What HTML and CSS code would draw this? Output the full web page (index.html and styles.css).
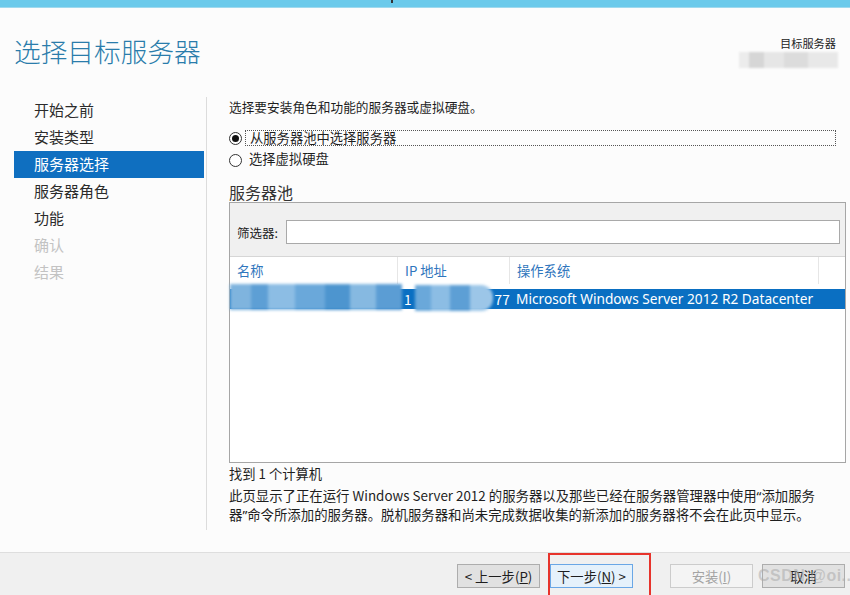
FILE: index.html
```html
<!DOCTYPE html>
<html lang="zh-CN">
  <head>
    <meta charset="UTF-8" />
    <meta name="viewport" content="width=device-width, initial-scale=1.0" />
    <title>添加角色和功能向导</title>
    <link rel="stylesheet" href="styles.css">
  </head>
  <body>
    <div class="topbar"><span class="tick"></span></div>

    <header class="header">
      <h1 class="title">选择目标服务器</h1>
      <div class="target">
        <div class="target-label">目标服务器</div>
        <div class="target-blur"></div>
      </div>
    </header>

    <div class="main">
      <nav class="steps">
        <div class="step">开始之前</div>
        <div class="step">安装类型</div>
        <div class="step active">服务器选择</div>
        <div class="step">服务器角色</div>
        <div class="step">功能</div>
        <div class="step disabled">确认</div>
        <div class="step disabled">结果</div>
      </nav>

      <section class="content">
        <p class="intro">选择要安装角色和功能的服务器或虚拟硬盘。</p>

        <div class="radio-row first">
          <span class="radio checked"></span>
          <span class="radio-label focus">从服务器池中选择服务器</span>
        </div>
        <div class="radio-row">
          <span class="radio"></span>
          <span class="radio-label">选择虚拟硬盘</span>
        </div>

        <h2 class="pool-title">服务器池</h2>

        <div class="pool">
          <div class="filter">
            <span class="filter-label">筛选器:</span>
            <div class="filter-input"></div>
          </div>
          <div class="grid">
            <div class="grid-head">
              <div class="col col-name">名称</div>
              <div class="col col-ip">IP 地址</div>
              <div class="col col-os">操作系统</div>
              <div class="col col-end"></div>
            </div>
            <div class="grid-row selected">
              <div class="col col-name"><span class="blur name-blur"></span></div>
              <div class="col col-ip">1<span class="blur ip-blur"></span>77</div>
              <div class="col col-os">Microsoft Windows Server 2012 R2 Datacenter</div>
            </div>
          </div>
        </div>

        <p class="found">找到 1 个计算机</p>
        <p class="note">此页显示了正在运行 Windows Server 2012 的服务器以及那些已经在服务器管理器中使用<span class="q">“</span>添加服务<br>器<span class="q">”</span>命令所添加的服务器。脱机服务器和尚未完成数据收集的新添加的服务器将不会在此页中显示。</p>
      </section>
    </div>

    <footer class="footer">
      <button class="btn">&lt; 上一步(<u>P</u>)</button>
      <button class="btn primary">下一步(<u>N</u>) &gt;</button>
      <button class="btn disabled install">安装(<u>I</u>)</button>
      <button class="btn">取消</button>
    </footer>

    <div class="mark"></div>
    <div class="watermark">CSDN @oi..</div>
  </body>
</html>
```

FILE: styles.css
```css
* {
  box-sizing: border-box;
}
body {
  margin: 0;
  width: 850px;
  height: 595px;
  overflow: hidden;
  position: relative;
  background-color: #fcfcfc;
  color: #1e1e1e;
  font-family: "Noto Sans", "Noto Sans CJK SC", sans-serif;
  font-size: 12.5px;
}
p {
  margin: 0;
}

.topbar {
  height: 8px;
  background-color: #6bcaeb;
  border-bottom: 1px solid #9fd9ee;
  position: relative;
}
.tick {
  position: absolute;
  left: 391px;
  top: 0;
  width: 2px;
  height: 3px;
  background-color: #333;
}

.header {
  height: 89px;
  display: flex;
  justify-content: space-between;
  align-items: flex-start;
  padding: 0 14px;
}
.title {
  margin: 26px 0 0;
  font-family: "Noto Sans CJK SC", sans-serif;
  font-weight: 300;
  font-size: 26.7px;
  line-height: 34px;
  color: #2a7cab;
}
.target {
  margin-top: 28px;
  display: flex;
  flex-direction: column;
  align-items: flex-end;
}
.target-label {
  font-family: "Noto Sans CJK SC", sans-serif;
  font-size: 11.2px;
  line-height: 14px;
  color: #222;
}
.target-blur {
  margin-top: 2px;
  width: 99px;
  height: 16px;
  background: linear-gradient(90deg, #ececec 0 10%, #d6d6d6 10% 25%, #e6e6e6 25% 45%, #dcdcdc 45% 70%, #e8e8e8 70% 100%);
  filter: blur(1px);
  margin-right: -2px;
}

.main {
  height: 433px;
  display: flex;
}
.steps {
  width: 207px;
  padding-left: 14px;
  border-right: 1px solid #dcdcdc;
  font-family: "Noto Sans CJK SC", sans-serif;
  font-size: 15px;
}
.step {
  width: 190px;
  height: 27px;
  line-height: 25px;
  padding-left: 20px;
  color: #2b2b2b;
}
.step.active {
  background-color: #0f6fc0;
  color: #fff;
}
.step.disabled {
  color: #c3c3c3;
}

.content {
  flex: 1;
  padding: 1px 4px 0 22px;
  font-family: "Noto Sans CJK SC", sans-serif;
}
.intro {
  line-height: 18px;
  font-size: 12.7px;
}
.radio-row {
  display: flex;
  align-items: center;
  height: 16px;
  margin-top: 6px;
  font-size: 13.3px;
}
.radio-row.first {
  margin-top: 14px;
}
.radio {
  width: 13px;
  height: 13px;
  border: 1px solid #333;
  border-radius: 50%;
  background-color: #fff;
  display: flex;
  justify-content: center;
  align-items: center;
  margin-right: 3px;
}
.radio.checked::after {
  content: "";
  width: 7px;
  height: 7px;
  border-radius: 50%;
  background-color: #111;
}
.radio-label {
  height: 16px;
  line-height: 14px;
  padding-left: 4px;
}
.radio-label.focus {
  flex: 1;
  margin-right: 10px;
  border: 1px dotted #555;
}

.pool-title {
  margin: 14px 0 0;
  font-weight: normal;
  font-size: 16px;
  line-height: 20px;
  color: #333;
}
.pool {
  border: 1px solid #a6a6a6;
}
.filter {
  height: 54px;
  display: flex;
  align-items: center;
  padding: 5px 5px 0 7px;
  background-color: #f0f0f0;
  border-bottom: 1px solid #d6d6d6;
}
.filter-label {
  width: 49px;
}
.filter-input {
  flex: 1;
  height: 24px;
  background-color: #fff;
  border: 1px solid #a9a9a9;
}

.grid {
  height: 205px;
  background-color: #fff;
}
.grid-head {
  display: flex;
  height: 27px;
  color: #2f76bd;
  font-size: 13.3px;
}
.grid-head .col {
  border-right: 1px solid #e6e6e6;
  line-height: 27px;
}
.col {
  padding-left: 7px;
  white-space: nowrap;
}
.col-name {
  width: 168px;
  padding-left: 7px;
}
.col-ip {
  width: 112px;
}
.col-os {
  width: 309px;
}
.col-end {
  flex: 1;
  border-right: none !important;
}
.grid-row {
  display: flex;
  height: 20px;
  line-height: 20px;
  margin-top: 5px;
}
.grid-row.selected {
  background-color: #0a6fc2;
  color: #fff;
}
.grid-row .col-os {
  font-family: "Noto Sans", "Noto Sans CJK SC", sans-serif;
  font-size: 13.7px;
  padding-left: 6px;
}
.grid-row .col-ip {
  font-size: 13.7px;
  padding-left: 6px;
  display: flex;
  align-items: center;
}
.grid-row .col-name {
  padding-left: 0;
}
.blur {
  display: inline-block;
  height: 26px;
  vertical-align: top;
  filter: blur(1.5px);
}
.name-blur {
  width: 172px;
  margin-top: -5px;
  background: linear-gradient(90deg, #7fb4de 0 12%, #5d9fd5 12% 22%, #8cbde4 22% 38%, #6aa8da 38% 55%, #4d95cf 55% 70%, #86b9e1 70% 85%, #5b9dd4 85% 100%);
}
.ip-blur {
  width: 78px;
  margin: -2px 2px 0 3px;
  border-radius: 0 12px 12px 0;
  background: linear-gradient(90deg, #6aa8da 0 20%, #8cbde4 20% 45%, #5d9fd5 45% 70%, #9cc6e8 70% 100%);
}

.found {
  margin-top: 2px;
  line-height: 18px;
  font-size: 13.3px;
}
.note {
  margin-top: 3px;
  line-height: 18px;
  font-size: 13.4px;
}
.q {
  font-family: "Noto Sans", sans-serif;
}

.footer {
  position: absolute;
  left: 0;
  right: 0;
  bottom: 0;
  height: 43px;
  border-top: 1px solid #dedede;
  background-color: #f0f0f0;
  display: flex;
  justify-content: flex-end;
  align-items: flex-start;
  padding: 11px 5px 0 0;
  gap: 10px;
}
.btn {
  width: 83px;
  height: 24px;
  padding: 0;
  border: 1px solid #adadad;
  background-color: #e1e1e1;
  color: #1e1e1e;
  font-family: "Noto Sans CJK SC", sans-serif;
  font-size: 13.3px;
}
.btn.primary {
  border-color: #6aa7e6;
  background-color: #e5f1fb;
}
.btn.install {
  margin-left: 27px;
}
.btn.disabled {
  color: #a3a3a3;
  border-color: #cccccc;
  background-color: #f4f4f4;
}
.footer .btn:last-child {
  margin-left: -1px;
}

.mark {
  position: absolute;
  left: 548px;
  top: 553px;
  width: 103px;
  height: 48px;
  border: 2px solid #e7332b;
}
.watermark {
  position: absolute;
  left: 758px;
  top: 567px;
  white-space: nowrap;
  font-family: "Liberation Sans", sans-serif;
  font-weight: bold;
  font-size: 16px;
  color: rgba(170, 170, 170, 0.55);
  letter-spacing: 0.5px;
}
```
